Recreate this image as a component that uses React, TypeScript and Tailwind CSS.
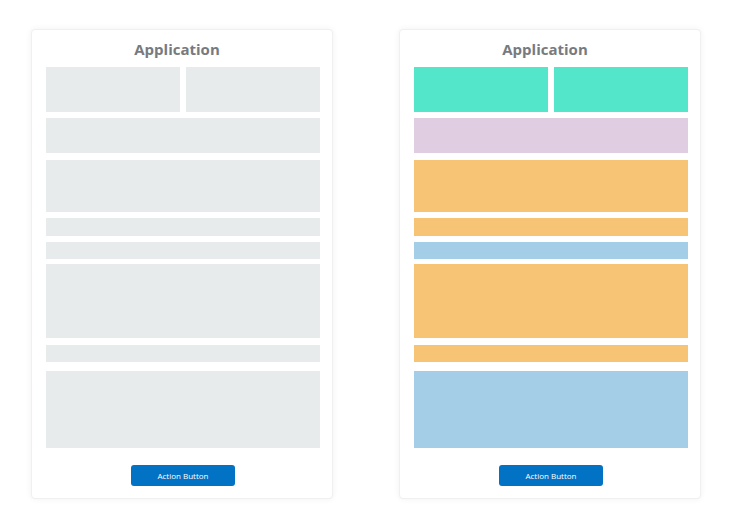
import React from "react";

function Card({ colored }: { colored: boolean }) {
  const gray = "bg-[#e8ebec]";
  const c = (col: string) => (colored ? col : gray);
  return (
    <div className="w-[302px] h-[470px] rounded-[4px] border border-[#f0f0f0] bg-white shadow-[0_0_6px_rgba(0,0,0,0.06)] pl-[14px] pr-[12px] flex flex-col">
      <div
        className="h-[38px] pr-[12px] flex items-center justify-center text-[15px] font-bold text-[#777a7e]"
        style={{ fontFamily: '"Open Sans", "Liberation Sans", sans-serif' }}
      >
        Application
      </div>
      <div className="-mt-px flex gap-[6px] h-[45px]">
        <div className={`flex-1 ${c("bg-[#53e6cb]")}`} />
        <div className={`flex-1 ${c("bg-[#53e6cb]")}`} />
      </div>
      <div className={`mt-[6px] h-[35px] ${c("bg-[#e0cde2]")}`} />
      <div className={`mt-[7px] h-[52px] ${c("bg-[#f7c475]")}`} />
      <div className={`mt-[6px] h-[18px] ${c("bg-[#f7c475]")}`} />
      <div className={`mt-[6px] h-[17px] ${c("bg-[#a4cee8]")}`} />
      <div className={`mt-[5px] h-[74px] ${c("bg-[#f7c475]")}`} />
      <div className={`mt-[7px] h-[17px] ${c("bg-[#f7c475]")}`} />
      <div className={`mt-[9px] h-[77px] ${c("bg-[#a4cee8]")}`} />
      <div className="mt-[17px] flex justify-center">
        <button
          className="w-[104px] h-[21px] rounded-[3px] bg-[#0272c5] text-white text-[8px] leading-none flex items-center justify-center"
          style={{ fontFamily: '"Open Sans", "Liberation Sans", sans-serif' }}
        >
          Action Button
        </button>
      </div>
    </div>
  );
}

export default function App() {
  return (
    <div className="w-[730px] h-[519px] bg-white pl-[31px] pt-[29px] flex gap-[66px]">
      <Card colored={false} />
      <Card colored={true} />
    </div>
  );
}
